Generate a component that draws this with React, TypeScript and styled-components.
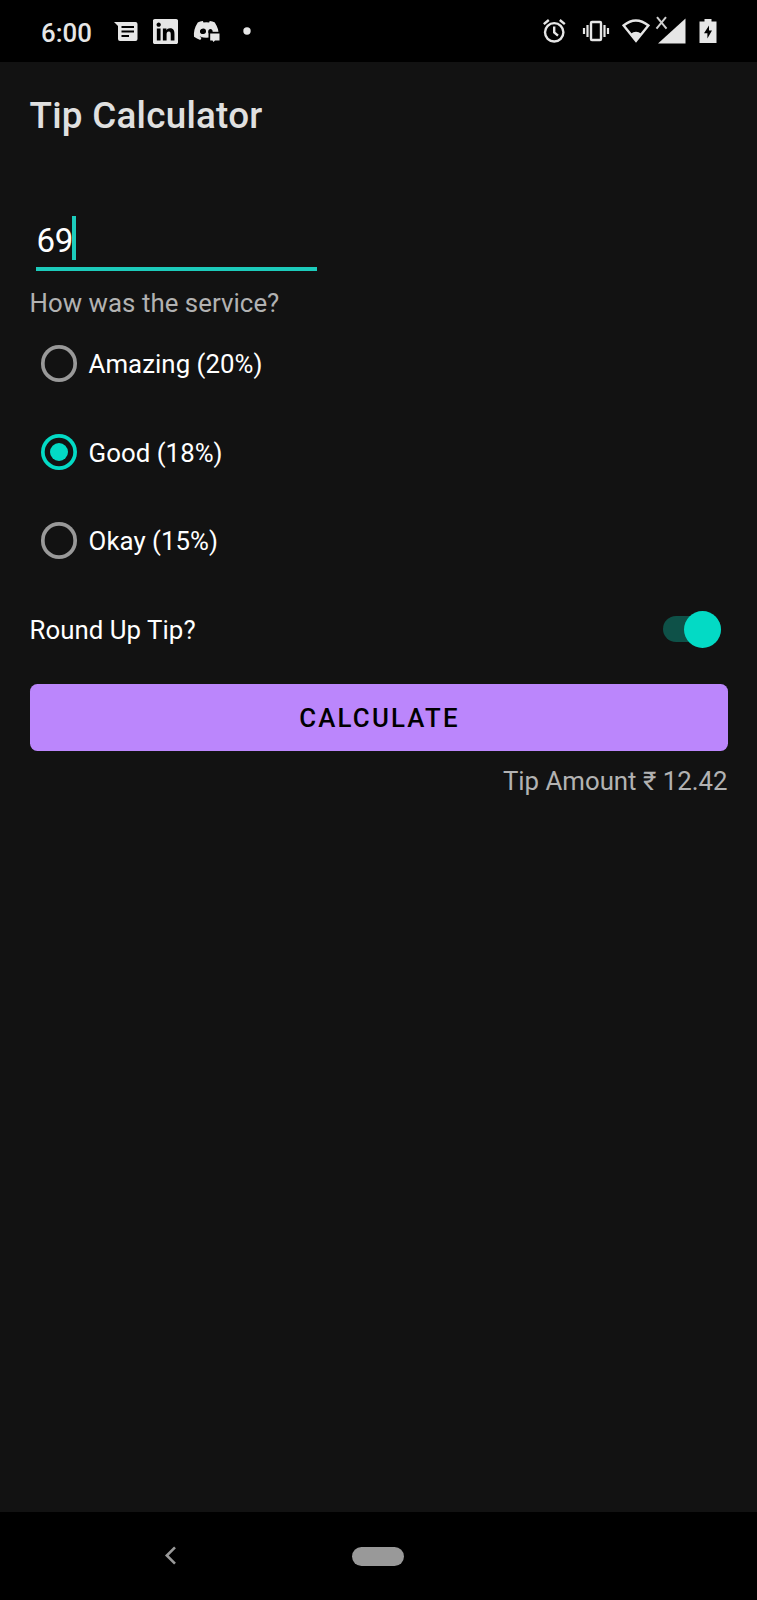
import React from "react";
import styled, { createGlobalStyle } from "styled-components";
import { FaDiscord, FaLinkedin } from "react-icons/fa";

const GlobalStyle = createGlobalStyle`
  * { box-sizing: border-box; }
  body { margin: 0; background: #121212; font-family: Roboto, "Liberation Sans", sans-serif; }
`;

const Screen = styled.div`
  display: flex;
  flex-direction: column;
  width: 757px;
  height: 1600px;
  background: #121212;
  color: #fff;
  overflow: hidden;
`;

const StatusBar = styled.header`
  display: flex;
  justify-content: space-between;
  height: 62.4px;
  flex: none;
  padding: 0 40px 0 41px;
  background: #000;
  color: #e6e6e6;
`;

const StatusGroup = styled.div`
  display: flex;
  align-items: center;
`;

const Clock = styled.span`
  width: 72.5px;
  font-size: 25.8px;
  line-height: 30px;
  font-weight: 500;
  padding-top: 3.5px;
`;

const Glyph = styled.svg<{ $gap?: number }>`
  display: block;
  flex: none;
  margin-left: ${({ $gap = 0 }) => $gap}px;
  overflow: visible;
`;

const AppBar = styled.div`
  display: flex;
  align-items: center;
  height: 103px;
  flex: none;
  padding: 4px 29.5px 0;
`;

const Title = styled.h1`
  margin: 0;
  font-size: 36.8px;
  line-height: 44px;
  font-weight: 500;
  letter-spacing: 0.26px;
  color: #e0e0e0;
`;

const Form = styled.main`
  display: flex;
  flex-direction: column;
  flex: 1;
  padding: 37px 29.5px 0;
`;

const CostField = styled.div`
  display: flex;
  align-items: flex-end;
  width: 281px;
  height: 69px;
  margin-left: 6.5px;
  padding-bottom: 7px;
  border-bottom: 4px solid #1ccbbb;
  font-size: 33.1px;
  line-height: 38px;
`;

const CostValue = styled.span`
  width: 36px;
  padding-left: 0.5px;
  letter-spacing: -0.3px;
  white-space: nowrap;
`;

const Caret = styled.i`
  width: 4px;
  height: 44px;
  background: #1ccbbb;
`;

const Question = styled.div`
  height: 48px;
  padding-top: 17px;
  font-size: 25.8px;
  line-height: 30px;
  letter-spacing: 0.05px;
  color: #b2b2b2;
`;

const Options = styled.div`
  display: flex;
  flex-direction: column;
`;

const Option = styled.label`
  display: flex;
  align-items: center;
  height: 88.4px;
  padding-left: 11px;
  font-size: 25.8px;
  line-height: 30px;
`;

const OptionText = styled.span`
  padding: 1.5px 0 0 11.3px;
  letter-spacing: 0.04px;
`;

const RadioRing = styled.span<{ $on: boolean }>`
  display: flex;
  align-items: center;
  justify-content: center;
  width: 36.8px;
  height: 36.8px;
  box-shadow: inset 0 0 0 3.7px ${({ $on }) => ($on ? "#03dac5" : "#999")};
  border-radius: 50%;

  &::after {
    content: "";
    width: 18.4px;
    height: 18.4px;
    border-radius: 50%;
    background: ${({ $on }) => ($on ? "#03dac5" : "transparent")};
  }
`;

const SwitchRow = styled.div`
  display: flex;
  align-items: center;
  justify-content: space-between;
  height: 88.4px;
  padding: 1px 6.5px 0 0;
  font-size: 25.8px;
  line-height: 30px;
`;

const SwitchText = styled.span`
  padding-top: 1px;
  letter-spacing: 0.05px;
`;

const SwitchTrack = styled.span`
  display: flex;
  align-items: center;
  justify-content: flex-end;
  width: 58px;
  height: 26px;
  border-radius: 13px;
  background: #0e5148;
`;

const SwitchThumb = styled.span`
  flex: none;
  width: 37px;
  height: 37px;
  border-radius: 50%;
  background: #03dac5;
`;

const CalculateButton = styled.button`
  height: 67.4px;
  margin-top: 10.8px;
  padding: 2px 0 0 2px;
  border: 0;
  border-radius: 7.4px;
  background: #bb86fc;
  color: #000;
  font: 500 25.8px/30px Roboto, "Liberation Sans", sans-serif;
  letter-spacing: 2.2px;
`;

const Result = styled.div`
  padding-top: 14.6px;
  font-size: 25.8px;
  line-height: 30px;
  text-align: right;
  color: #b2b2b2;
`;

const NavBar = styled.nav`
  display: flex;
  align-items: center;
  height: 88px;
  flex: none;
  padding-left: 165px;
  background: #000;
`;

const HomePill = styled.span`
  width: 52px;
  height: 19px;
  margin-left: 176px;
  border-radius: 10px;
  background: #999;
`;

const options = [
  { label: "Amazing (20%)", on: false },
  { label: "Good (18%)", on: true },
  { label: "Okay (15%)", on: false },
];

const fill = "#e6e6e6";

export default function App() {
  return (
    <Screen>
      <GlobalStyle />
      <StatusBar>
        <StatusGroup>
          <Clock>6:00</Clock>
          <Glyph width="24" height="19" viewBox="0 0 24 19" fill={fill}>
            <path d="M0 0H21.5Q23.5 0 23.5 2V17Q23.5 19 21.5 19H6Q4 19 4 17V4Z" />
            <path d="M7.5 5H20M7.5 9.5H20M7.5 14H15" stroke="#000" strokeWidth="2" />
          </Glyph>
          <Glyph $gap={15.5} width="25" height="25" viewBox="0 0 25 25">
            <FaLinkedin x={-1.8} y={-1.8} size={28.6} color={fill} />
          </Glyph>
          <Glyph $gap={17} width="25" height="22" viewBox="0 0 25 22">
            <FaDiscord x={-2.2} y={-3} size={27} color={fill} />
            <path d="M13.5 11.8H25V22H13.5Z" fill="#000" />
            <circle cx="8.3" cy="11.2" r="2.7" fill="#000" />
            <path d="M15.2 13.5H24.5V20.5H20L18.5 22L17.5 20.5H15.2Z" fill={fill} />
          </Glyph>
          <Glyph $gap={23} width="8" height="8" viewBox="0 0 8 8">
            <circle cx="4" cy="4" r="3.7" fill={fill} />
          </Glyph>
        </StatusGroup>
        <StatusGroup>
          <Glyph width="23" height="24" viewBox="0 0 23 24" fill="none" stroke={fill} strokeWidth="2.4">
            <circle cx="11.2" cy="13.3" r="9.2" />
            <path d="M11.2 7.5V13.5L15 16.7M.8 5.2L5.8 1M21.8 5.2L16.8 1" />
          </Glyph>
          <Glyph $gap={17} width="26" height="20" viewBox="0 0 26 20" fill="none" stroke={fill} strokeWidth="2.4">
            <rect x="8" y="1" width="10" height="18" rx="1" />
            <path d="M4.5 4V16M1 7V13M21.5 4V16M25 7V13" strokeWidth="2.2" />
          </Glyph>
          <Glyph $gap={13} width="28" height="24" viewBox="0 0 28 24">
            <path d="M1.6 6.5Q13.8 -3.5 26.4 6.5L14 21.8Z" fill="none" stroke={fill} strokeWidth="2.4" />
            <path d="M8.5 15Q14 10.5 19.5 15L14 22Z" fill={fill} />
          </Glyph>
          <Glyph $gap={7} width="29" height="27" viewBox="0 0 29 27">
            <path d="M28.5 0.5V25.5H1Z" fill={fill} />
            <path d="M0 -.8L9.5 10.7M9 -.8L-.5 10.7" stroke="#cfcfcf" strokeWidth="2" />
          </Glyph>
          <Glyph $gap={13} width="18" height="24" viewBox="0 0 18 24">
            <path d="M5.5 0H12.5V2.4H17.5V24H.5V2.4H5.5Z" fill={fill} />
            <path d="M10 6.5L5 14.2H8.4V19.5L13 11.5H10Z" fill="#000" />
          </Glyph>
        </StatusGroup>
      </StatusBar>
      <AppBar>
        <Title>Tip Calculator</Title>
      </AppBar>
      <Form>
        <CostField>
          <CostValue>69</CostValue>
          <Caret />
        </CostField>
        <Question>How was the service?</Question>
        <Options>
          {options.map((o) => (
            <Option key={o.label}>
              <RadioRing $on={o.on} />
              <OptionText>{o.label}</OptionText>
            </Option>
          ))}
        </Options>
        <SwitchRow>
          <SwitchText>Round Up Tip?</SwitchText>
          <SwitchTrack>
            <SwitchThumb />
          </SwitchTrack>
        </SwitchRow>
        <CalculateButton>CALCULATE</CalculateButton>
        <Result>Tip Amount ₹ 12.42</Result>
      </Form>
      <NavBar>
        <Glyph width="11" height="18" viewBox="0 0 11 18" fill="none" stroke="#999" strokeWidth="2.6">
          <path d="M10 .3L1.8 8.5L10 16.7" />
        </Glyph>
        <HomePill />
      </NavBar>
    </Screen>
  );
}
